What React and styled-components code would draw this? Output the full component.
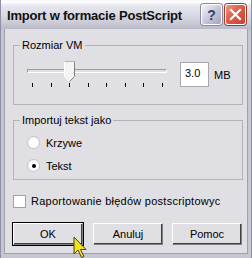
import React from "react";
import styled, { createGlobalStyle } from "styled-components";

const GlobalStyle = createGlobalStyle`
  html, body {
    margin: 0;
    padding: 0;
    background: #fff;
  }
  body {
    font-family: "Liberation Sans", Arial, sans-serif;
    font-size: 11px;
    color: #000;
  }
`;

const Window = styled.div`
  position: relative;
  width: 252px;
  height: 258px;
  box-sizing: border-box;
  display: flex;
  flex-direction: column;
  background: #c6c6d2;
  border-left: 1px solid #8e8ea4;
  border-right: 1px solid #8e8ea4;
  overflow: hidden;
`;

const TitleBar = styled.div`
  height: 29px;
  flex: none;
  display: flex;
  align-items: center;
  padding: 0 5px 0 6px;
  background: linear-gradient(
    #f6f6fa 0,
    #ffffff 6%,
    #e6e6ee 20%,
    #dadae4 50%,
    #cacad6 80%,
    #b8b8c8 100%
  );
`;

const Title = styled.span`
  flex: 1;
  font-weight: bold;
  font-size: 13px;
  letter-spacing: -0.2px;
  color: #101010;
  margin-top: 2px;
`;

const CaptionButton = styled.div`
  width: 21px;
  height: 21px;
  box-sizing: border-box;
  margin-left: 3px;
  border-radius: 3px;
  border: 1px solid #ffffff;
  display: flex;
  align-items: center;
  justify-content: center;
  background: ${(p) =>
    p.close
      ? "linear-gradient(135deg, #f09a88 0%, #e0604a 40%, #c8402e 100%)"
      : "linear-gradient(135deg, #f4f4fb 0%, #c8c8dc 50%, #a4a4bc 100%)"};
  box-shadow: 0 0 0 1px ${(p) => (p.close ? "#a03a2a" : "#8a8aa4")};
  font-weight: bold;
  font-size: 14px;
  color: #3c3c66;
`;

const Client = styled.div`
  flex: 1;
  margin: 0 3px 4px 3px;
  border: 1px solid #a0a0b4;
  border-top: none;
  background: #e0dfe3;
  display: flex;
  flex-direction: column;
  padding: 10px 0 0 8px;
`;

const Group = styled.fieldset`
  margin: 0;
  padding: 0;
  width: 230px;
  height: ${(p) => p.h}px;
  box-sizing: border-box;
  border: 1px solid #b4b4b4;
  min-inline-size: 0;
  margin-bottom: ${(p) => p.gap || 0}px;
`;

const Legend = styled.legend`
  margin-left: 6px;
  padding: 0 2px;
  line-height: 13px;
  font-size: 11px;
`;

const SliderRow = styled.div`
  display: flex;
  align-items: flex-start;
  padding: 9px 0 0 13px;
`;

const Slider = styled.div`
  position: relative;
  width: 140px;
  height: 28px;
`;

const Track = styled.div`
  position: absolute;
  left: 0;
  right: 0;
  top: 8px;
  height: 4px;
  box-sizing: border-box;
  border-top: 1px solid #9c9c9c;
  border-left: 1px solid #9c9c9c;
  border-bottom: 1px solid #ffffff;
  border-right: 1px solid #ffffff;
  background: #e0dfe3;
`;

const Ticks = styled.div`
  position: absolute;
  left: 5px;
  right: 4px;
  top: 22px;
  display: flex;
  justify-content: space-between;
`;

const Tick = styled.span`
  width: 1px;
  height: 4px;
  background: #000;
`;

const Thumb = styled.svg`
  position: absolute;
  top: 0;
`;

const NumberInput = styled.input`
  width: 29px;
  height: 25px;
  box-sizing: border-box;
  margin: 1px 0 0 13px;
  border: 1px solid #a8a8b0;
  padding: 0 0 4px 4px;
  font-family: "Liberation Sans", Arial, sans-serif;
  font-size: 11px;
  outline: none;
`;

const Unit = styled.span`
  margin: 8px 0 0 5px;
`;

const RadioList = styled.div`
  display: flex;
  flex-direction: column;
  gap: 10px;
  padding: 9px 0 0 13px;
`;

const RadioRow = styled.label`
  display: flex;
  align-items: center;
  gap: 6px;
  height: 13px;
`;

const RadioDot = styled.span`
  width: 11px;
  height: 11px;
  border-radius: 50%;
  border: 1px solid #c4c4c4;
  background: radial-gradient(circle at 60% 60%, #ffffff 40%, #ececec 100%);
  display: flex;
  align-items: center;
  justify-content: center;
  &::after {
    content: "";
    width: 4px;
    height: 4px;
    border-radius: 50%;
    background: ${(p) => (p.checked ? "#000" : "transparent")};
  }
`;

const CheckRow = styled.label`
  display: flex;
  align-items: center;
  gap: 5px;
  margin-top: 14px;
  height: 14px;
  width: 207px;
  overflow: hidden;
  white-space: nowrap;
  letter-spacing: 0.25px;
`;

const CheckBox = styled.span`
  flex: none;
  width: 13px;
  height: 13px;
  box-sizing: border-box;
  border: 1px solid #a0a0a8;
  background: #fff;
`;

const ButtonRow = styled.div`
  display: flex;
  gap: 9px;
  margin-top: 15px;
  margin-left: -1px;
`;

const Button = styled.button`
  width: 70px;
  height: 22px;
  box-sizing: border-box;
  padding: 0;
  font-family: "Liberation Sans", Arial, sans-serif;
  font-size: 11px;
  color: #000;
  background: #e0dfe3;
  border: 1px solid;
  border-color: #ffffff #808080 #808080 #ffffff;
  box-shadow: ${(p) =>
    p.primary ? "0 0 0 1px #000, inset -1px -1px 0 #404040" : "inset -1px -1px 0 #404040"};
  ${(p) => (p.primary ? "margin: 0 1px;" : "")}
`;

const Cursor = styled.svg`
  position: absolute;
  left: 72px;
  top: 236px;
`;

const ticks = Array.from({ length: 8 });
const sliderValue = 2;

export default function App() {
  const thumbLeft = (sliderValue * 130) / 7;
  return (
    <>
      <GlobalStyle />
      <Window>
        <TitleBar>
          <Title>Import w formacie PostScript</Title>
          <CaptionButton>?</CaptionButton>
          <CaptionButton close>
            <svg width="13" height="13" viewBox="0 0 13 13">
              <path
                d="M2 2 L11 11 M11 2 L2 11"
                stroke="#ffffff"
                strokeWidth="2.2"
                strokeLinecap="square"
              />
            </svg>
          </CaptionButton>
        </TitleBar>
        <Client>
          <Group h={66} gap={9}>
            <Legend>Rozmiar VM</Legend>
            <SliderRow>
              <Slider>
                <Track />
                <Ticks>
                  {ticks.map((_, i) => (
                    <Tick key={i} />
                  ))}
                </Ticks>
                <Thumb width="11" height="22" viewBox="0 0 11 22" style={{ left: thumbLeft }}>
                  <path d="M0.5 0.5 H10.5 V15.5 L5.5 20.5 L0.5 15.5 Z" fill="#f4f4f4" stroke="#ffffff" />
                  <path d="M10.5 0.5 V15.5 L5.5 20.5" fill="none" stroke="#808080" />
                  <path d="M0.5 0.5 H10.5" fill="none" stroke="#b4b4b4" />
                </Thumb>
              </Slider>
              <NumberInput defaultValue="3.0" />
              <Unit>MB</Unit>
            </SliderRow>
          </Group>
          <Group h={66}>
            <Legend>Importuj tekst jako</Legend>
            <RadioList>
              <RadioRow>
                <RadioDot />
                Krzywe
              </RadioRow>
              <RadioRow>
                <RadioDot checked />
                Tekst
              </RadioRow>
            </RadioList>
          </Group>
          <CheckRow>
            <CheckBox />
            Raportowanie błędów postscriptowych
          </CheckRow>
          <ButtonRow>
            <Button primary>OK</Button>
            <Button>Anuluj</Button>
            <Button>Pomoc</Button>
          </ButtonRow>
        </Client>
        <Cursor width="16" height="24" viewBox="0 0 16 24">
          <path
            d="M1 1 L1 18 L5 14 L8.5 21.5 L11 20.5 L7.5 13.5 L13 13.5 Z"
            fill="#f2e21a"
            stroke="#4a4410"
            strokeWidth="1"
          />
        </Cursor>
      </Window>
    </>
  );
}
